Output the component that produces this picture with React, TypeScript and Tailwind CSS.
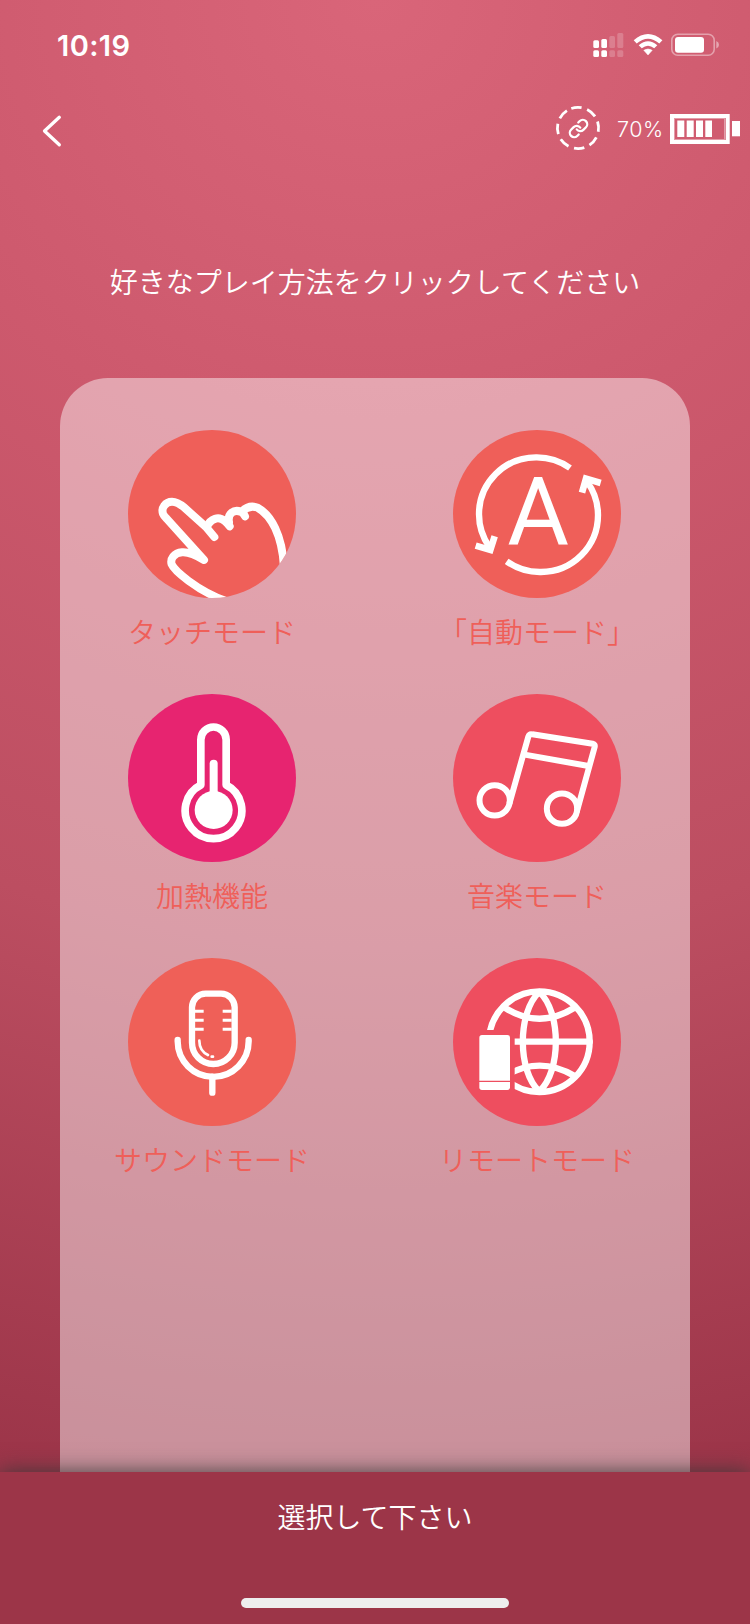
import React from 'react';
import { Link } from 'lucide-react';

interface Mode {
  label: string;
  color: string;
  viewBox: string;
  icon: React.ReactNode;
}

const modes: Mode[] = [
  {
    label: 'タッチモード',
    color: 'bg-[#ef5f59]',
    viewBox: '54 60 504 504',
    icon: (
      <g strokeWidth="24">
        <path d="M313 381L288 351L222 292C208 280 200 275 186 275C166 275 153 294 159 311C161 316 165 321 170 326L282 450C262 438 238 425 216 427C192 429 180 447 185 463C192 480 258 541 350 574" />
        <path d="M291 350C302 325 326 318 344 333C350 338 355 343 359 349" />
        <path d="M357 336C352 311 372 297 392 305C399 308 402 313 405 319" />
        <path d="M396 304C412 289 430 288 443 293C484 316 516 375 522 470" />
      </g>
    )
  },
  {
    label: '「自動モード」',
    color: 'bg-[#ef5f59]',
    viewBox: '69 60 504 504',
    icon: (
      <>
        <g strokeWidth="19" strokeLinecap="butt" strokeLinejoin="miter">
          <path d="M420 174A171 171 0 0 0 318 142A171 171 0 0 0 147 313A171 171 0 0 0 178 411" />
          <path d="M137 407L181 420L194 379" strokeWidth="20" />
          <path d="M230 454A171 171 0 0 0 333 486A171 171 0 0 0 504 315A171 171 0 0 0 472 216" />
          <path d="M456 248L468 206L512 219" strokeWidth="20" />
        </g>
        <text
          x="324.5"
          y="404"
          textAnchor="middle"
          fontSize="284"
          fill="white"
          stroke="none"
          className="font-['Roboto',sans-serif]"
        >
          A
        </text>
      </>
    )
  },
  {
    label: '加熱機能',
    color: 'bg-[#e72470]',
    viewBox: '54 42 504 504',
    icon: (
      <>
        <path d="M272.500 315V179a38 38 0 0 1 76 0V315A85 85 0 1 1 272.500 315Z" strokeWidth="23" />
        <path d="M311 251V380" strokeWidth="24" />
        <circle cx="311" cy="390" r="57" fill="white" stroke="none" />
      </>
    )
  },
  {
    label: '音楽モード',
    color: 'bg-[#ee4e5f]',
    viewBox: '69 42 504 504',
    icon: (
      <g strokeWidth="18">
        <circle cx="194" cy="361" r="45.500" />
        <circle cx="396" cy="386" r="45.500" />
        <path d="M239 368L295 170Q298 161 307 163L488 191Q496 193 494 201L441 393" />
        <path d="M284 224L476 258" />
      </g>
    )
  },
  {
    label: 'サウンドモード',
    color: 'bg-[#ef6058]',
    viewBox: '84 54 504 504',
    icon: (
      <>
        <g strokeWidth="19">
          <path d="M276 202a41 41 0 0 1 41 -41h46a41 41 0 0 1 41 41V308a64 64 0 0 1 -128 0Z" />
          <path d="M233 300v4a106.500 106.500 0 0 0 213 0v-4" />
          <path d="M337 410V458" />
        </g>
        <path d="M284 214h27M284 241h27M284 268h27M395 214h-27M395 241h-27M395 268h-27" strokeWidth="9" strokeLinecap="butt" />
        <path d="M298 302C298 322 308 337 324 345M335 350h4" strokeWidth="8" />
      </>
    )
  },
  {
    label: 'リモートモード',
    color: 'bg-[#ee4e5f]',
    viewBox: '69 54 504 504',
    icon: (
      <>
        <clipPath id="globe-cut">
          <path d="M100 100H540V500H254V270H100Z" />
        </clipPath>
        <g strokeWidth="19" clipPath="url(#globe-cut)">
          <circle cx="328" cy="305" r="151" />
          <path d="M328 156C262 216 262 394 328 454C394 394 394 216 328 156Z" />
          <path d="M177 305H479" />
          <path d="M226 204Q328 268 432 204" />
          <path d="M226 408Q328 346 434 408" />
        </g>
        <path d="M156 285H232Q240 285 240 293V422.500H148V293Q148 285 156 285Z" fill="white" stroke="none" />
        <path d="M148 426H240V442Q240 450 232 450H156Q148 450 148 442Z" fill="white" stroke="none" />
      </>
    )
  }
];

function ModeButton({ mode }: { mode: Mode }) {
  return (
    <button className="flex w-[200px] flex-col items-center">
      <span className={`block size-[168px] overflow-hidden rounded-full ${mode.color}`}>
        <svg
          viewBox={mode.viewBox}
          className="size-full"
          fill="none"
          stroke="white"
          strokeLinecap="round"
          strokeLinejoin="round"
        >
          {mode.icon}
        </svg>
      </span>
      <span className="mt-[13px] h-[41px] text-[28px] leading-10 font-[350] whitespace-nowrap text-[#ef5f59]">{mode.label}</span>
    </button>
  );
}

function StatusBar() {
  return (
    <div className="flex h-[88px] items-center justify-between pt-0.5 pr-[31px] pl-[57px]">
      <span className="font-['Inter',sans-serif] text-[29px] leading-none font-semibold tracking-[0.4px]">10:19</span>
      <svg width="127" height="26" viewBox="592 32 127 26" fill="white">
        <rect x="593.300" y="40.300" width="5.700" height="7.700" rx="1.500" />
        <rect x="601.300" y="39" width="5.700" height="9" rx="1.500" />
        <rect x="593.300" y="50.300" width="5.700" height="6.700" rx="1.500" />
        <rect x="601.300" y="50.300" width="5.700" height="6.700" rx="1.500" />
        <g opacity="0.2">
          <rect x="609.300" y="36" width="5.700" height="12" rx="1.500" />
          <rect x="617.300" y="33" width="6" height="15" rx="1.500" />
          <rect x="609.300" y="50.300" width="5.700" height="6.700" rx="1.500" />
          <rect x="617.300" y="50.300" width="6" height="6.700" rx="1.500" />
        </g>
        <path d="M633.700 40.200Q648 27.800 662.400 40.200L659.300 43.400Q648 34 636.700 43.400Z" />
        <path d="M638.700 45.200Q648 37.400 657.300 45.200L654.200 48.300Q648 43.300 641.800 48.300Z" />
        <path d="M643.800 50.300Q648 47.500 652.200 50.300L648 55Z" stroke="white" strokeWidth="0.500" strokeLinejoin="round" />
        <rect x="671.800" y="34.200" width="42.400" height="21" rx="6" fill="none" stroke="white" strokeWidth="1.600" opacity="0.42" />
        <rect x="675" y="37" width="29" height="15.700" rx="3" />
        <path d="M716.300 41Q719 42 719 44.800T716.300 48.600Z" opacity="0.45" />
      </svg>
    </div>
  );
}

function NavBar() {
  return (
    <div className="flex h-20 items-center justify-between pr-[10px] pl-10">
      <svg width="24" height="34" viewBox="40 114 24 34" fill="none" stroke="white" strokeWidth="3.300" strokeLinecap="round" strokeLinejoin="round" className="mt-1.5">
        <path d="M59.300 117.300L44.500 131L59.300 144.800" />
      </svg>
      <div className="flex items-center">
        <svg width="46" height="46" viewBox="555 105 46 46" fill="none" stroke="white" className="mr-4">
          <circle cx="578" cy="128" r="20.600" strokeWidth="2.800" strokeDasharray="10.400 5.780" transform="rotate(-109 578 128)" />
          <Link x={568} y={118} width={21} height={21} strokeWidth={2.6} />
        </svg>
        <span className="mt-[3px] w-[53px] font-['Inter',sans-serif] text-[21.500px] leading-none font-[350] tracking-[0.5px]">70%</span>
        <svg width="70" height="30" viewBox="670 114 70 30" fill="white" className="mt-0.5">
          <rect x="672" y="116" width="55.700" height="26" fill="none" stroke="white" strokeWidth="4" />
          <rect x="674.500" y="118.500" width="50" height="21" fill="none" stroke="white" opacity="0.4" />
          <rect x="677.300" y="120.500" width="7" height="16.500" />
          <rect x="686.700" y="120.500" width="7" height="16.500" />
          <rect x="696" y="120.500" width="7" height="16.500" />
          <rect x="705.300" y="120.500" width="6.700" height="16.500" />
          <rect x="732" y="121" width="8" height="15.300" />
        </svg>
      </div>
    </div>
  );
}

export default function App() {
  return (
    <div className="flex h-[1624px] w-[750px] flex-col overflow-hidden bg-[radial-gradient(ellipse_1700px_1580px_at_50%_0%,#d96579_0%,#cd596d_29%,#bc4e61_60%,#9c3549_95%)] font-['Noto_Sans_CJK_JP',sans-serif] text-white">
      <StatusBar />
      <NavBar />
      <h1 className="mt-[93px] h-10 text-center text-[28px] leading-10 font-[350]">好きなプレイ方法をクリックしてください</h1>
      <main className="mx-[60px] mt-[77px] flex-1 rounded-t-[48px] bg-white/45 pt-[52px] pr-[53px] pl-[52px]">
        <div className="grid grid-cols-[200px_200px] justify-between gap-y-[42px]">
          {modes.map((mode) => (
            <ModeButton key={mode.label} mode={mode} />
          ))}
        </div>
      </main>
      <footer className="relative flex h-[152px] flex-col items-center justify-between bg-[#9c3548] pt-6 pb-4 shadow-[0_0_20px_rgba(55,55,55,0.9)]">
        <p className="h-10 text-[28px] leading-10 font-[350]">選択して下さい</p>
        <div className="h-2.5 w-[268px] rounded-full bg-[#eeeeee]" />
      </footer>
    </div>
  );
}
